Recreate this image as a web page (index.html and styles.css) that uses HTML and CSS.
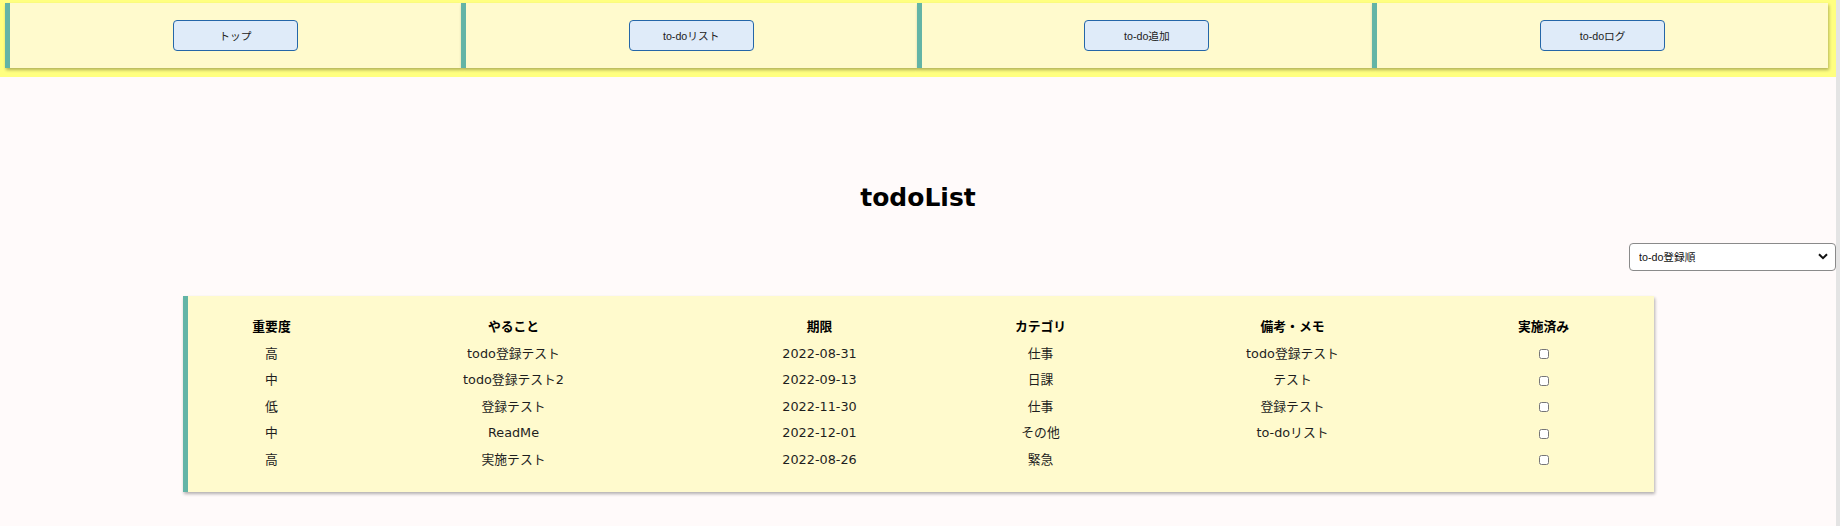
FILE: index.html
```html
<!DOCTYPE html>
<html lang="ja">
<head>
<meta charset="utf-8">
<title>todoList</title>
<link rel="stylesheet" href="styles.css">
</head>
<body>
<header class="nav">
  <div class="nav-card"><button class="nav-btn">トップ</button></div>
  <div class="nav-card"><button class="nav-btn">to-doリスト</button></div>
  <div class="nav-card"><button class="nav-btn">to-do追加</button></div>
  <div class="nav-card"><button class="nav-btn">to-doログ</button></div>
</header>
<main>
  <h1 class="title">todoList</h1>
  <div class="sort-row">
    <div class="select-wrap">
      <select class="sort-select">
        <option>to-do登録順</option>
      </select>
      <svg class="chevron" width="10" height="7" viewBox="0 0 10 7"><path d="M1 1.2 L5 5.2 L9 1.2" fill="none" stroke="#111" stroke-width="2"/></svg>
    </div>
  </div>
  <section class="list-card">
    <table class="todo-table">
      <colgroup>
        <col class="c1"><col class="c2"><col class="c3"><col class="c4"><col class="c5"><col class="c6">
      </colgroup>
      <thead>
        <tr><th>重要度</th><th>やること</th><th>期限</th><th>カテゴリ</th><th>備考・メモ</th><th>実施済み</th></tr>
      </thead>
      <tbody>
        <tr><td>高</td><td>todo登録テスト</td><td>2022-08-31</td><td>仕事</td><td>todo登録テスト</td><td><input type="checkbox" class="chk"></td></tr>
        <tr><td>中</td><td>todo登録テスト2</td><td>2022-09-13</td><td>日課</td><td>テスト</td><td><input type="checkbox" class="chk"></td></tr>
        <tr><td>低</td><td>登録テスト</td><td>2022-11-30</td><td>仕事</td><td>登録テスト</td><td><input type="checkbox" class="chk"></td></tr>
        <tr><td>中</td><td>ReadMe</td><td>2022-12-01</td><td>その他</td><td>to-doリスト</td><td><input type="checkbox" class="chk"></td></tr>
        <tr><td>高</td><td>実施テスト</td><td>2022-08-26</td><td>緊急</td><td></td><td><input type="checkbox" class="chk"></td></tr>
      </tbody>
    </table>
  </section>
</main>
</body>
</html>
```
FILE: styles.css
```css
html {
  background: #fffafa;
}
body {
  margin: 0;
  min-height: 526px;
  background: #fffafa;
  border-right: 4px solid #e4e4e4;
  font-family: "DejaVu Sans", "Noto Sans CJK JP", sans-serif;
  font-size: 12.8px;
  color: #1e1e1e;
}
.nav {
  display: flex;
  background: #ffff80;
  padding: 3px 8px 9px 5px;
}
.nav-card {
  flex: 1;
  height: 65px;
  background: #fffacd;
  border-left: 5px solid #63b4a6;
  box-shadow: 1px 2px 3px rgba(0, 0, 0, 0.3);
  display: flex;
  align-items: center;
  justify-content: center;
}
.nav-btn {
  width: 125px;
  height: 31px;
  background: #dfebf9;
  border: 1px solid #2466a8;
  border-radius: 4px;
  font-family: "Liberation Sans", "Noto Sans CJK JP", sans-serif;
  font-size: 10.7px;
  color: #222;
  padding: 0;
}
.title {
  margin: 106px 0 0;
  text-align: center;
  font-size: 25px;
  line-height: 30px;
  font-weight: bold;
  color: #000;
}
.sort-row {
  display: flex;
  justify-content: flex-end;
  margin-top: 30px;
}
.select-wrap {
  position: relative;
  width: 207px;
  height: 28px;
}
.sort-select {
  appearance: none;
  -webkit-appearance: none;
  width: 207px;
  height: 28px;
  margin: 0;
  padding: 0 0 0 9px;
  background: #fff;
  border: 1px solid #8a8a8a;
  border-radius: 4px;
  font-family: "Liberation Sans", "Noto Sans CJK JP", sans-serif;
  font-size: 10.7px;
  color: #111;
}
.chevron {
  position: absolute;
  right: 8px;
  top: 10px;
  pointer-events: none;
}
.list-card {
  width: 1471px;
  margin: 25px auto 0;
  box-sizing: border-box;
  background: #fffacd;
  border-left: 5px solid #63b4a6;
  box-shadow: 1px 2px 3px rgba(0, 0, 0, 0.3);
  padding: 18px 0 18px;
}
.todo-table {
  width: 1428px;
  margin: 0 auto;
  border-collapse: collapse;
  table-layout: fixed;
}
.c1 { width: 130px; }
.c2 { width: 354px; }
.c3 { width: 258px; }
.c4 { width: 184px; }
.c5 { width: 320px; }
.c6 { width: 182px; }
.todo-table th,
.todo-table td {
  padding: 4px 0;
  line-height: 18.6px;
  text-align: center;
  vertical-align: middle;
}
.todo-table th {
  font-weight: bold;
  color: #000;
}
.chk {
  width: 10px;
  height: 10px;
  margin: 0;
  vertical-align: middle;
}
```
